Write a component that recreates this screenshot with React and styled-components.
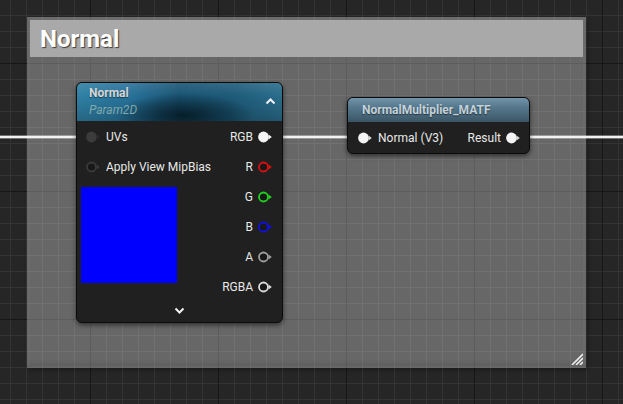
import React from 'react';
import styled, { createGlobalStyle } from 'styled-components';

const GlobalStyle = createGlobalStyle`
  html, body {
    margin: 0;
    padding: 0;
    background: #262626;
  }
  body {
    font-family: Roboto, "Liberation Sans", sans-serif;
  }
`;

// graph canvas with minor (16px) and major (128px) grid lines
const Canvas = styled.div`
  position: relative;
  width: 623px;
  height: 404px;
  overflow: hidden;
  background-color: #262626;
  background-image:
    linear-gradient(to right, #171717 1px, transparent 1px),
    linear-gradient(to bottom, #171717 1px, transparent 1px),
    linear-gradient(to right, #343434 1px, transparent 1px),
    linear-gradient(to bottom, #343434 1px, transparent 1px);
  background-size: 128px 128px, 128px 128px, 16px 16px, 16px 16px;
  background-position: 90px 0, 0 63px, 10px 0, 0 15px;
`;

const CommentBox = styled.div`
  position: absolute;
  left: 27px;
  top: 17px;
  width: 559px;
  height: 351px;
  box-sizing: border-box;
  padding: 3px;
  background: rgba(255, 255, 255, 0.3);
  box-shadow:
    inset 0 0 0 3px rgba(255, 255, 255, 0.04),
    inset 0 -4px 4px rgba(0, 0, 0, 0.12),
    2px 2px 4px rgba(0, 0, 0, 0.3);
`;

const CommentHeader = styled.div`
  height: 37px;
  display: flex;
  align-items: center;
  padding-left: 10px;
  background: #a9a9a9;
  color: #fff;
  font-size: 24px;
  font-weight: 700;
  text-shadow: 1px 1px 1px #3a3a3a;
`;

const ResizeHandle = styled.svg`
  position: absolute;
  right: 3px;
  bottom: 3px;
`;

const Wires = styled.svg`
  position: absolute;
  left: 0;
  top: 0;
`;

const Node = styled.div`
  position: absolute;
  left: ${p => p.$x}px;
  top: ${p => p.$y}px;
  width: ${p => p.$w}px;
  box-sizing: border-box;
  background: #1f201f;
  border: 1px solid #0b0b0b;
  border-radius: 6px;
  box-shadow: 0 2px 5px rgba(0, 0, 0, 0.55);
  overflow: hidden;
  color: #e8e8e8;
  font-size: 12px;
`;

const ParamHeader = styled.div`
  height: 38px;
  box-sizing: border-box;
  padding: 3px 6px 0 12px;
  display: flex;
  justify-content: space-between;
  background:
    radial-gradient(ellipse 70px 22px at 52% 85%, rgba(6, 28, 40, 0.95) 0%, rgba(6, 28, 40, 0) 100%),
    linear-gradient(180deg, rgba(255, 255, 255, 0.1) 0%, rgba(0, 0, 0, 0) 35%, rgba(0, 0, 0, 0.2) 100%),
    linear-gradient(90deg, #2f80a4 0%, #27729a 25%, #1a5473 50%, #1d5a78 75%, #2a6d8c 100%);
`;

const FuncHeader = styled.div`
  height: 24px;
  display: flex;
  align-items: center;
  padding-left: 14px;
  background: linear-gradient(180deg, #7194aa 0%, #55778c 40%, #3a5666 100%);
`;

const Title = styled.div`
  font-weight: 700;
  line-height: 15px;
  color: ${p => p.$color || '#d6d6d6'};
  text-shadow: 0 1px 1px rgba(0, 0, 0, 0.5);
`;

const SubTitle = styled.div`
  margin-top: 2px;
  line-height: 15px;
  font-style: italic;
  color: #7fa8ab;
`;

const Chevron = styled.svg`
  align-self: center;
  margin-bottom: 4px;
`;

const Body = styled.div`
  display: flex;
  justify-content: space-between;
  padding-top: ${p => p.$top || 0}px;
`;

const Column = styled.div`
  display: flex;
  flex-direction: column;
  align-items: ${p => (p.$right ? 'flex-end' : 'flex-start')};
`;

const PinRow = styled.div`
  height: ${p => p.$h || 30}px;
  display: flex;
  align-items: center;
  gap: 5px;
  padding: ${p => (p.$right ? `0 ${p.$pad}px 0 0` : `0 0 0 ${p.$pad}px`)};
`;

const Preview = styled.div`
  width: 96px;
  height: 96px;
  margin: 5px 0 0 4px;
  background: #0000ff;
`;

const Footer = styled.div`
  height: 20px;
  display: flex;
  justify-content: center;
  align-items: center;
`;

const PinIcon = styled.svg`
  display: block;
  flex: none;
`;

const Pin = ({ color, fill, arrow }) => (
  <PinIcon width="15" height="12" viewBox="0 0 15 12">
    {fill ? (
      <circle cx="5.5" cy="6" r="5.4" fill={fill} />
    ) : (
      <circle cx="5.5" cy="6" r="4.5" fill="#181818" stroke={color} strokeWidth="1.8" />
    )}
    <polygon points="10.6,3.4 13.8,6 10.6,8.6" fill={arrow || color || fill} />
  </PinIcon>
);

const ChevronIcon = ({ up }) => (
  <Chevron width="11" height="7" viewBox="0 0 11 7">
    <polyline
      points={up ? '1.5,5.5 5.5,1.5 9.5,5.5' : '1.5,1.5 5.5,5.5 9.5,1.5'}
      fill="none"
      stroke="#f2f2f2"
      strokeWidth="2"
    />
  </Chevron>
);

const outputs = [
  { label: 'RGB', fill: '#f4f4f4' },
  { label: 'R', color: '#dd1010' },
  { label: 'G', color: '#1ed21e' },
  { label: 'B', color: '#1010e6' },
  { label: 'A', color: '#9c9c9c' },
  { label: 'RGBA', color: '#dadada' },
];

const App = () => (
  <Canvas>
    <GlobalStyle />

    <CommentBox>
      <CommentHeader>Normal</CommentHeader>
      <ResizeHandle width="12" height="12" viewBox="0 0 12 12">
        <path d="M12 1 L1 12 M12 5 L5 12 M12 9 L9 12" stroke="#f0f0f0" strokeWidth="1.6" />
      </ResizeHandle>
    </CommentBox>

    <Wires width="623" height="404">
      <line x1="0" y1="137" x2="623" y2="137" stroke="rgba(255,255,255,0.35)" strokeWidth="4" />
      <line x1="0" y1="137" x2="623" y2="137" stroke="#f2f2f2" strokeWidth="2" />
    </Wires>

    <Node $x={76} $y={82} $w={207}>
      <ParamHeader>
        <div>
          <Title>Normal</Title>
          <SubTitle>Param2D</SubTitle>
        </div>
        <ChevronIcon up />
      </ParamHeader>
      <Body $top={1}>
        <Column>
          <PinRow $pad={9}>
            <Pin fill="#3c3c3c" arrow="#2c2c2c" />
            UVs
          </PinRow>
          <PinRow $pad={9}>
            <Pin color="#3a3a3a" />
            Apply View MipBias
          </PinRow>
          <Preview />
        </Column>
        <Column $right>
          {outputs.map(o => (
            <PinRow key={o.label} $right $pad={9}>
              {o.label}
              <Pin color={o.color} fill={o.fill} />
            </PinRow>
          ))}
        </Column>
      </Body>
      <Footer>
        <ChevronIcon />
      </Footer>
    </Node>

    <Node $x={347} $y={97} $w={183}>
      <FuncHeader>
        <Title $color="#c3d1da">NormalMultiplier_MATF</Title>
      </FuncHeader>
      <Body>
        <PinRow $h={31} $pad={10}>
          <Pin fill="#f4f4f4" arrow="#d8d8d8" />
          Normal (V3)
        </PinRow>
        <PinRow $h={31} $right $pad={8}>
          Result
          <Pin fill="#f4f4f4" arrow="#d8d8d8" />
        </PinRow>
      </Body>
    </Node>
  </Canvas>
);

export default App;
